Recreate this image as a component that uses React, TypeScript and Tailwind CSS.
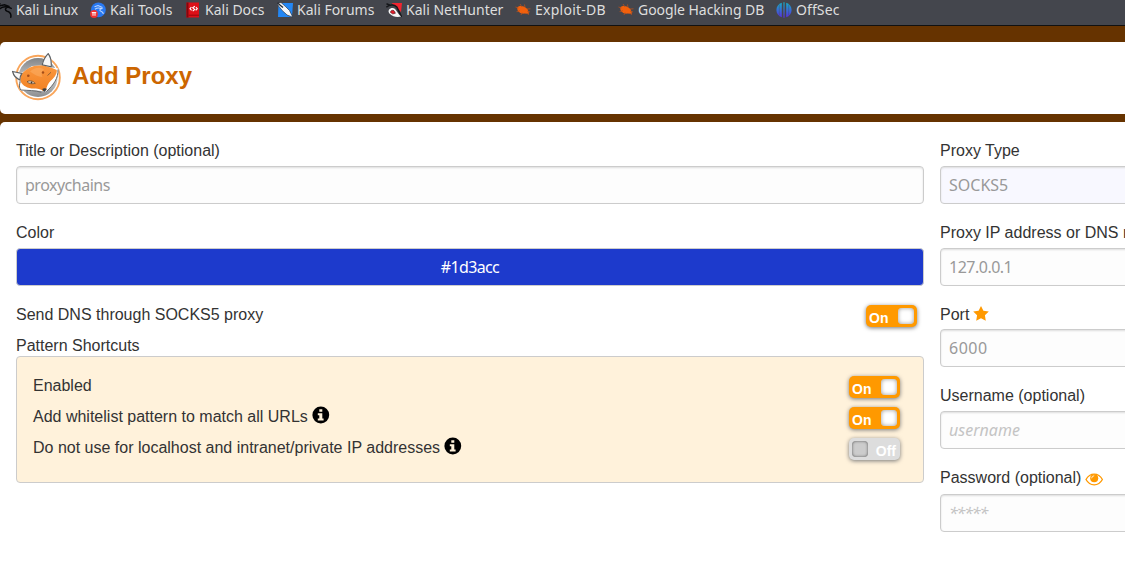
import type { ReactNode } from "react";

const ui = "font-['Noto_Sans',sans-serif]";

function Dragon() {
  return (
    <svg width="16" height="16" viewBox="0 0 16 16" fill="none" stroke="#08090b" strokeWidth="1.5" strokeLinecap="round">
      <path d="M1.500 3.400 4 1.800M3 4 8.500 2.800 13 4.400M3.500 7C6 4.800 9 4.400 11.500 5 9 6 8.700 8.400 11.200 9.200 14.200 10 15.400 11.600 14.800 15.200M12 5 15.200 6.400" />
    </svg>
  );
}

function ToolsIcon() {
  return (
    <svg width="16" height="16" viewBox="0 0 16 16">
      <circle cx="8.400" cy="7.800" r="7.400" fill="#2878f0" />
      <path d="M4.500 4.800 8 3.600 12.500 5.400M5 7.200C7 5.600 9 5.600 11.500 6.600 9.200 7.200 9.600 8.600 11 9.200 12.800 9.800 13.300 10.800 13.300 12" fill="none" stroke="#bcd6ff" strokeWidth="1.100" />
      <circle cx="4" cy="12" r="3.900" fill="#ef3131" />
      <path d="M1.800 10.600h4.400M3 10.600v3.200M5 10.600v3.200" stroke="#fff" strokeWidth="1" />
    </svg>
  );
}

function DocsIcon() {
  return (
    <svg width="16" height="16" viewBox="0 0 16 16">
      <path d="M1.500.5h12.500v15H1.500z" fill="#dc1018" />
      <path d="M1.500.5h2v15h-2z" fill="#86070d" />
      <path d="M3.500 13.200h10.500" stroke="#98070c" strokeWidth="1" />
      <path d="M6.400 5 5 6.700l1.600 1.700M10.900 5l1.400 1.700-1.600 1.700M9.900 4.200 7.700 5.800l2 1.600-2 1.800" fill="none" stroke="#fff" strokeWidth="1.100" />
    </svg>
  );
}

function ForumsIcon() {
  return (
    <svg width="16" height="16" viewBox="0 0 16 16">
      <path d="M1.500 1H16l-1 14H1z" fill="#2387f5" />
      <path d="M0 1.500 4 .5l4.800 4.300 3.700 3.700 3.300 6.700-5.700-2.200-4.900-4.500L2 4.500z" fill="#f4f7fb" stroke="#20242b" strokeWidth=".6" />
      <path d="m.5 1 5.500 4.500" stroke="#23272d" strokeWidth="1.300" />
    </svg>
  );
}

function NetHunterIcon() {
  return (
    <svg width="16" height="16" viewBox="0 0 16 16">
      <path d="M5.500 1H16l-1 9-2.200-2L9 4z" fill="#f3242f" />
      <path d="M.5 1.800 4 3.200M.3 5.200C3.500 2.500 8 2 10.800 5L15.600 15" fill="none" stroke="#15171a" strokeWidth="1.500" />
      <path d="M4 12c-2.500-2-1.500-5.300 1.500-6C10 5 10.400 10.500 15.200 14.500 10.800 15.500 6.800 14.700 4 12z" fill="#f7f7f7" />
      <path d="M4.500 10.500C4.300 8.500 6.500 7.600 8 8.700c.8.700 1 1.600 1.400 2.600L6.800 12z" fill="#df1d2a" stroke="#2b1014" strokeWidth=".5" />
    </svg>
  );
}

function BugIcon() {
  return (
    <svg width="16" height="16" viewBox="0 0 16 16">
      <path d="M2.300 5.200C5 2.700 10.500 4 12.800 7.600l1.200 4.200-5-.2C6 12 2.800 10 2.300 7z" fill="#f2600c" />
      <path d="m.5 5 3 1M5 2l2 3M9.500 2.500l.5 3M12 7l3.500-.2M12 9l3 1M1.600 9.600 5 8.700M6 13l1-2.500M12.800 11l.7 2" stroke="#b9501d" strokeWidth=".8" />
    </svg>
  );
}

function OffSecIcon() {
  return (
    <svg width="16" height="16" viewBox="0 0 16 16">
      <defs>
        <linearGradient id="offsec" gradientUnits="userSpaceOnUse" x1="0" y1="0" x2="0" y2="16">
          <stop stopColor="#12b3c7" />
          <stop offset="1" stopColor="#5a2be0" />
        </linearGradient>
      </defs>
      <path d="M5.800.8v14.400C2.500 14.200.4 11.500.4 8s2.100-6.200 5.400-7.200zM7.400.3h1.200v15.400H7.400zM10.200.8v14.400c3.300-1 5.400-3.700 5.400-7.200s-2.100-6.200-5.400-7.200z" fill="url(#offsec)" />
      <path d="M3.300 2.500v11M12.700 2.500v11" stroke="#44464d" strokeWidth=".4" />
    </svg>
  );
}

function FoxLogo() {
  return (
    <svg width="50" height="48" viewBox="0 0 50 48" className="-mt-0.5 shrink-0">
      <defs>
        <linearGradient id="disc" x1="0" y1="0" x2="0" y2="1">
          <stop stopColor="#828486" />
          <stop offset=".55" stopColor="#c8c9ca" />
          <stop offset="1" stopColor="#8b8d8f" />
        </linearGradient>
        <linearGradient id="fur" x1="0" y1="0" x2="0" y2="1">
          <stop stopColor="#fa9840" />
          <stop offset="1" stopColor="#f28224" />
        </linearGradient>
      </defs>
      <circle cx="26" cy="24.500" r="21.800" fill="#fff" stroke="#f9a55a" strokeWidth="1.900" />
      <circle cx="26" cy="24.500" r="19.600" fill="url(#disc)" />
      <path d="M.6 18.500 10.500 19.500 20 13 29.500 12.500C31 8 33.500 3.500 36.200.6 39 5 40.200 10 39.800 14.500L46.300 15.500C47 23 43 31 34 38.500L24 37.500 8.500 37.500C6.500 34.500 7.300 31.500 8.300 28.500 4.500 26.500 1.500 23 .6 18.500z" fill="#fff" />
      <path d="M8.300 27.500C8 23.500 9.500 20.500 11.500 19 15 16 19 13.500 22 13l9-.8 8.500 2.500 5.300 2.300c.4 4-2.600 7.700-5.800 10.500-3.200 3.200-4.300 6-5 9.500L31 38c-3.500-2.800-7.500-2.200-11.500-2.500C13.500 34.500 9.500 31.500 8.300 27.500z" fill="url(#fur)" />
      <path d="M18 18.500c4-3.800 10-5 14-2-2.500 1.500-3 4.500-1.500 7.500-4.500-.500-8-2-12.500-5.500z" fill="#fbb269" opacity=".5" />
      <path d="M.6 18.500 9.800 20.300C8.300 22.500 8 24.500 7.800 27 4.500 25.500 1.500 22.500.6 18.500zM36.200.6c-3 3-5 7-6 11.200l9 2c.4-4.800.200-8.800-3-13.200z" fill="#f8f8f8" stroke="#5d6063" strokeWidth="1.200" />
      <path d="M8.300 28.500C7.300 31.500 6.800 34.500 8.800 37c7 .5 14.500.3 20.500 2.300M46 16.500c.5 8.500-4.500 15.500-11.500 22" fill="none" stroke="#676a6d" strokeWidth="1" />
      <path d="M15 28.700c3-1.500 5.800-1 8.300 1.700-3.200.8-6.300.4-8.300-1.700z" fill="#ead7c4" stroke="#704a2a" strokeWidth=".8" />
      <circle cx="19.500" cy="29.500" r=".9" fill="#40362f" />
      <path d="m35.500 22.500 3.500-3.200" stroke="#93602f" strokeWidth="1" />
      <circle cx="16.300" cy="22.700" r="1.300" fill="#a54d18" />
      <circle cx="31" cy="19.500" r="1.200" fill="#a54d18" />
      <path d="M30.300 36c1.200-.9 3.600-1 4.600 0l-2.100 2.700c-1.200-.2-2.200-1.400-2.500-2.700z" fill="#3c3d40" />
    </svg>
  );
}

function InfoIcon() {
  return (
    <svg className="ml-1 inline-block align-[-2px]" width="18" height="18" viewBox="0 0 18 18">
      <circle cx="8.800" cy="9" r="8.400" />
      <path d="M7.300 3.300h3v2.500h-3zM5.800 7.300h4.500v5.300h1.300v1.900H5.800v-1.900h1.500V9.200H5.800z" fill="#fff2db" />
    </svg>
  );
}

function StarIcon() {
  return (
    <svg className="ml-1 inline-block align-[-1px]" width="16" height="15" viewBox="0 0 16 15" fill="#f90">
      <path d="m8 0 2.400 4.800 5.400.8-3.900 3.700.9 5.400L8 12.200l-4.800 2.500.9-5.400L.200 5.600l5.400-.8z" />
    </svg>
  );
}

function EyeIcon() {
  return (
    <svg className="ml-1 inline-block align-[-3px]" width="19" height="13" viewBox="0 0 19 13">
      <path d="M1 6.500C5-.6 13.400-.6 17.400 6.500 13.400 13.600 5 13.600 1 6.500z" fill="#fff" stroke="#f90" strokeWidth="1.300" />
      <circle cx="9.200" cy="5.300" r="4" fill="#f90" />
      <path d="M6.700 5.300A2.500 2.500 0 0 1 9.200 2.800" fill="none" stroke="#fff" strokeWidth=".8" />
    </svg>
  );
}

const bookmarks = [
  { name: "Kali Linux", icon: <Dragon />, w: "w-[94px]", track: "tracking-[-0.1px]" },
  { name: "Kali Tools", icon: <ToolsIcon />, w: "w-[95px]", track: "tracking-[0.1px]" },
  { name: "Kali Docs", icon: <DocsIcon />, w: "w-[92px]", track: "" },
  { name: "Kali Forums", icon: <ForumsIcon />, w: "w-[109px]", track: "" },
  { name: "Kali NetHunter", icon: <NetHunterIcon />, w: "w-[129px]", track: "" },
  { name: "Exploit-DB", icon: <BugIcon />, w: "w-[103px]", track: "tracking-[0.25px]" },
  { name: "Google Hacking DB", icon: <BugIcon />, w: "w-[158px]", track: "tracking-[-0.05px]" },
  { name: "OffSec", icon: <OffSecIcon />, w: "w-[80px]", track: "tracking-[0.1px]" },
];

function Label({ children }: { children: ReactNode }) {
  return <div className="h-7 whitespace-nowrap text-base leading-[26px]">{children}</div>;
}

function Box({ children, className = "" }: { children: ReactNode; className?: string }) {
  return (
    <div className={`${ui} flex h-[38px] items-center rounded border border-[#ccc] px-2 text-base shadow-[inset_0_1px_2px_#ddd] ${className}`}>
      {children}
    </div>
  );
}

function Toggle({ on = true }: { on?: boolean }) {
  return (
    <div className={`flex h-[22px] w-[51px] shrink-0 items-center justify-between rounded-[5px] text-sm font-bold text-white shadow-[0_1px_4px_#777] ${on ? "bg-[#f90] pr-[3px] pl-[3px]" : "flex-row-reverse bg-[#ddd] pr-1 pl-[3px]"}`}>
      <span className="pt-[3px] leading-5">{on ? "On" : "Off"}</span>
      <span className={`size-4 rounded ${on ? "bg-white shadow-[inset_0_0_4px_#999]" : "bg-[#ccc] shadow-[inset_0_0_3px_#555]"}`} />
    </div>
  );
}

function ToggleRow({ children, on = true }: { children: ReactNode; on?: boolean }) {
  return (
    <div className="flex h-[31px] items-start justify-between pr-[7px]">
      <Label>{children}</Label>
      <div className="pt-[3px]"><Toggle on={on} /></div>
    </div>
  );
}

export default function App() {
  return (
    <div className="flex h-[588px] w-[1125px] flex-col overflow-hidden bg-[#630] font-['Liberation_Sans',Arial,sans-serif] text-[#333]">
      <nav className={`${ui} h-[26px] shrink-0 border-b border-[#111] bg-[#44464d] text-sm text-[#dedede]`}>
        <div className="-ml-1 flex h-5 items-center">
          {bookmarks.map((b) => (
            <div key={b.name} className={`flex shrink-0 items-center gap-1 whitespace-nowrap ${b.w}`}>
              <span className="shrink-0">{b.icon}</span>
              <span className={b.track}>{b.name}</span>
            </div>
          ))}
        </div>
      </nav>
      <header className="mt-4 flex h-[72px] shrink-0 items-center rounded-l-[5px] bg-white pl-3">
        <FoxLogo />
        <h1 className="-mt-1 ml-2.5 text-2xl font-bold text-[#c60]">Add Proxy</h1>
      </header>
      <main className="mt-2 flex min-h-0 flex-1 gap-4 overflow-hidden rounded-tl-[5px] bg-white pt-4 pl-4">
        <section className="w-[908px] shrink-0">
          <Label>Title or Description (optional)</Label>
          <Box className="mb-4 bg-[#fdfdfd] tracking-[-0.5px] text-[#999]">proxychains</Box>
          <Label>Color</Label>
          <div className={`${ui} mb-4 flex h-[38px] items-center justify-center rounded border border-[#ccc] bg-[#1d3acc] text-base tracking-[-0.65px] text-white`}>#1d3acc</div>
          <ToggleRow>Send DNS through SOCKS5 proxy</ToggleRow>
          <div className="h-[23px] leading-[26px]">Pattern Shortcuts</div>
          <div className="h-[127px] rounded border border-[#ccc] bg-[#fff2db] px-4 pt-4">
            <ToggleRow>Enabled</ToggleRow>
            <ToggleRow>Add whitelist pattern to match all URLs<InfoIcon /></ToggleRow>
            <ToggleRow on={false}>Do not use for localhost and intranet/private IP addresses<InfoIcon /></ToggleRow>
          </div>
        </section>
        <section className="w-[908px] shrink-0">
          <Label>Proxy Type</Label>
          <Box className="mb-4 bg-[#f8f8ff] text-[#999]">SOCKS5</Box>
          <Label>Proxy IP address or DNS name</Label>
          <Box className="mb-4 bg-[#fdfdfd] tracking-[-0.5px] text-[#999]">127.0.0.1</Box>
          <div className="-mb-px"><Label>Port<StarIcon /></Label></div>
          <Box className="mb-4 bg-[#fdfdfd] tracking-[0.5px] text-[#999]">6000</Box>
          <Label>Username (optional)</Label>
          <Box className="mb-4 bg-[#fdfdfd] italic text-[#c4c4c4]">username</Box>
          <div className="mb-px"><Label>Password (optional)<EyeIcon /></Label></div>
          <Box className="bg-[#fdfdfd] tracking-[-1.2px] italic text-[#c4c4c4]">*****</Box>
        </section>
      </main>
    </div>
  );
}
